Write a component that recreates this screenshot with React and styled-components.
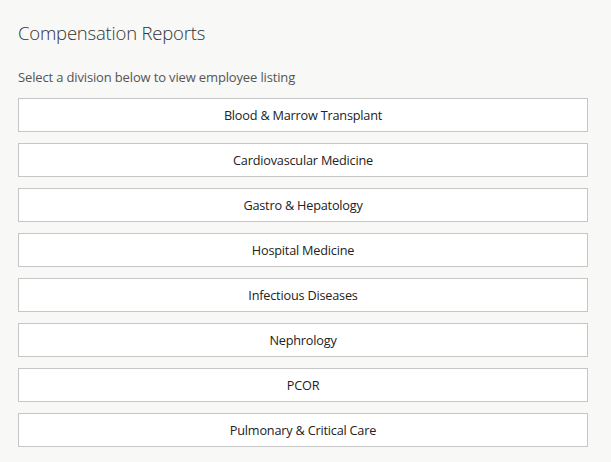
import React from "react";
import styled, { createGlobalStyle } from "styled-components";

const Global = createGlobalStyle`
  html, body { margin: 0; padding: 0; background: #f8f8f7; }
  body { font-family: "Open Sans", "Noto Sans", sans-serif; }
`;

const Page = styled.div`
  padding: 20px 23px 0 18px;
  width: 570px;
`;

const Title = styled.h1`
  margin: 0;
  font-size: 18.5px;
  font-weight: 300;
  color: #333;
  line-height: 26px;
  letter-spacing: -0.2px;
`;

const Subtitle = styled.p`
  margin: 22px 0 0;
  font-size: 13px;
  color: #555;
  line-height: 18px;
  letter-spacing: -0.15px;
`;

const List = styled.div`
  margin-top: 12px;
  display: flex;
  flex-direction: column;
  gap: 11px;
`;

const DivisionButton = styled.button`
  display: flex;
  align-items: center;
  justify-content: center;
  height: 34px;
  width: 570px;
  padding: 0;
  background: #fff;
  border: 1px solid #c6c6c6;
  border-radius: 0;
  font-family: "Open Sans", "Noto Sans", sans-serif;
  font-size: 12.7px;
  color: #222;
  letter-spacing: -0.2px;
  cursor: pointer;
`;

const divisions = [
  "Blood & Marrow Transplant",
  "Cardiovascular Medicine",
  "Gastro & Hepatology",
  "Hospital Medicine",
  "Infectious Diseases",
  "Nephrology",
  "PCOR",
  "Pulmonary & Critical Care",
];

export default function App() {
  return (
    <>
      <Global />
      <Page>
        <Title>Compensation Reports</Title>
        <Subtitle>Select a division below to view employee listing</Subtitle>
        <List>
          {divisions.map((d) => (
            <DivisionButton key={d}>{d}</DivisionButton>
          ))}
        </List>
      </Page>
    </>
  );
}
